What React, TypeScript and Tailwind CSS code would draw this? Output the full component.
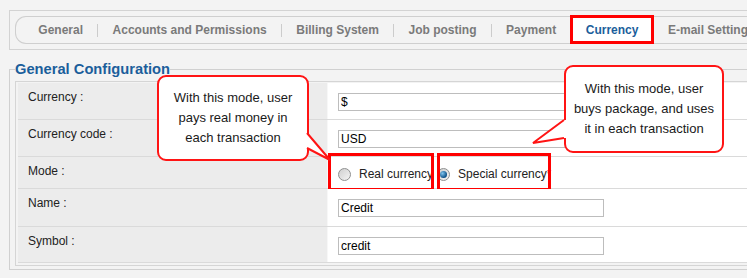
const tabs = [
  'General',
  'Accounts and Permissions',
  'Billing System',
  'Job posting',
  'Payment',
  'Currency',
  'E-mail Settings',
];

const font = { fontFamily: '"Liberation Sans", Arial, sans-serif' };

function Radio({ checked }: { checked?: boolean }) {
  return (
    <span className="relative flex h-[13px] w-[13px] shrink-0 items-center justify-center rounded-full border border-[#8e8f8f] bg-[linear-gradient(135deg,#cfcfcf,#f4f4f4)]">
      {checked && (
        <span className="h-[7px] w-[7px] rounded-full bg-[radial-gradient(circle_at_35%_35%,#7fc4ee,#0b4f86_70%)]" />
      )}
    </span>
  );
}

function Field({ value }: { value: string }) {
  return (
    <input
      readOnly
      value={value}
      className="block h-[18px] w-[266px] border border-[#bdbdbd] bg-white pl-[2px] text-[12px] leading-[16px] text-black outline-none"
      style={font}
    />
  );
}

function Row({
  label,
  height,
  children,
}: {
  label: string;
  height: string;
  children: React.ReactNode;
}) {
  return (
    <div className={`flex border-b border-[#dadada] bg-[#f7f7f7] ${height}`}>
      <div className="w-[309px] shrink-0 bg-[#ececec] pl-[10px] pt-[7px] text-[12px] leading-[14px] text-[#222]">
        {label}
      </div>
      <div className="relative ml-[1px] flex flex-1 items-start bg-white pl-[10px] pt-[10px]">{children}</div>
    </div>
  );
}

function Callout({
  box,
  tail,
  lines,
}: {
  box: string;
  tail: React.ReactNode;
  lines: string[];
}) {
  return (
    <div className={`absolute ${box}`}>
      <div className="flex h-full w-full flex-col items-center justify-center rounded-[9px] border-2 border-[#ff1414] bg-white text-[13px] leading-[20px] text-[#1a1a1a]">
        {lines.map((l) => (
          <span key={l}>{l}</span>
        ))}
      </div>
      {tail}
    </div>
  );
}

export default function App() {
  return (
    <div className="relative h-[278px] w-[747px] overflow-hidden bg-[#f3f3f3] pl-[9px] pt-[10px]" style={font}>
      {/* tab strip */}
      <div className="w-[800px] border-b border-l border-t border-[#d3d3d3] py-[5px] pl-[5px]">
        <div className="flex h-[28px] items-center rounded-l-[11px] border border-r-0 border-[#cfcfcf] pl-[8px] text-[12px] font-bold text-[#7a7a7a]">
          {tabs.map((t, i) => (
            <div key={t} className="flex items-center">
              {i > 0 && <span className="h-[13px] w-px bg-[#cccccc]" />}
              {t === 'Currency' ? (
                <span className="relative flex h-[26px] items-center bg-white px-[14.3px] text-[#1b5e9b]">
                  {t}
                  <span className="absolute -bottom-[1px] -left-[1px] -right-[1px] -top-[2px] border-[3px] border-[#ff0000]" />
                </span>
              ) : (
                <span className="whitespace-nowrap px-[14.3px]">{t}</span>
              )}
            </div>
          ))}
        </div>
      </div>

      {/* configuration */}
      <fieldset className="mt-[11px] w-[800px] border border-[#d0d0d0] pb-[3px] pl-[5px] pt-[3px]">
        <legend className="text-[14.7px] font-bold leading-[17px] text-[#1b5e9b]">General Configuration</legend>
        <div className="border border-[#d5d5d5] pb-[2px] pl-[2px] pt-[1px]">
          <Row label="Currency :" height="h-[37px]">
            <Field value="$" />
          </Row>
          <Row label="Currency code :" height="h-[37px]">
            <Field value="USD" />
          </Row>
          <Row label="Mode :" height="h-[32px]">
            <div className="flex items-center text-[12px] leading-[14px] text-[#222]">
              <Radio />
              <span className="ml-[8px] whitespace-nowrap">Real currency</span>
              <span className="ml-[4px]">
                <Radio checked />
              </span>
              <span className="ml-[8px] whitespace-nowrap">
                Special currency<span className="text-[#ff0000]">*</span>
              </span>
            </div>
            <span className="absolute left-0 top-[-4px] h-[38px] w-[106px] border-[3px] border-[#ff0000]" />
            <span className="absolute left-[109px] top-[-4px] h-[38px] w-[114px] border-[3px] border-[#ff0000]" />
          </Row>
          <Row label="Name :" height="h-[38px]">
            <Field value="Credit" />
          </Row>
          <Row label="Symbol :" height="h-[36px]">
            <Field value="credit" />
          </Row>
        </div>
      </fieldset>

      <Callout
        box="left-[157px] top-[75px] h-[86px] w-[152px]"
        lines={['With this mode, user', 'pays real money in', 'each transaction']}
        tail={
          <svg className="absolute left-[148px] top-[56px] overflow-visible" width="26" height="32">
            <polygon points="0,2 2,2 25,29 2,17 0,17" fill="#fff" />
            <polyline points="2,2 25,29 2,17" fill="none" stroke="#ff1414" strokeWidth="2" />
          </svg>
        }
      />
      <Callout
        box="left-[564px] top-[65px] h-[88px] w-[160px]"
        lines={['With this mode, user', 'buys package, and uses', 'it in each transaction']}
        tail={
          <svg className="absolute -left-[32px] top-[54px] overflow-visible" width="36" height="26">
            <polygon points="36,1 32,1 1,24 32,19 36,19" fill="#fff" />
            <polyline points="32,1 1,24 32,19" fill="none" stroke="#ff1414" strokeWidth="2" />
          </svg>
        }
      />
    </div>
  );
}
